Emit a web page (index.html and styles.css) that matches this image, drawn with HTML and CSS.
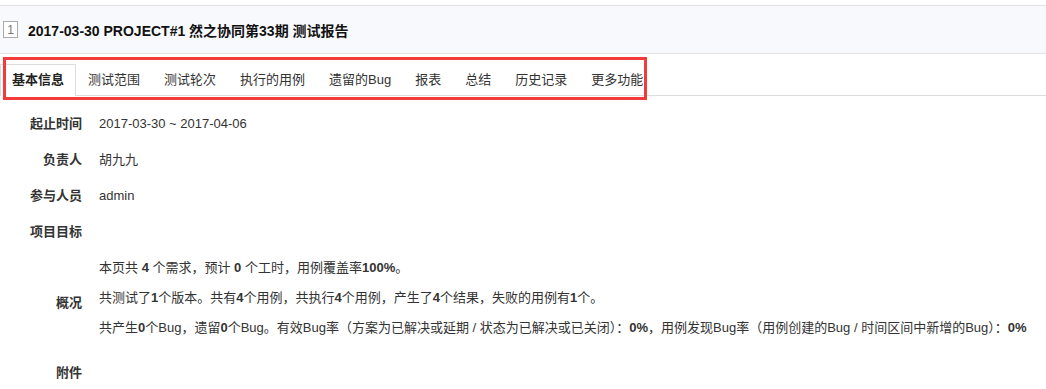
FILE: index.html
```html
<!DOCTYPE html>
<html lang="zh-CN">
<head>
<meta charset="utf-8">
<title>测试报告</title>
<link rel="stylesheet" href="styles.css">
</head>
<body>
<div class="header">
  <span class="idx">1</span>
  <strong class="title">2017-03-30 PROJECT#1 然之协同第33期 测试报告</strong>
</div>
<ul class="nav">
  <li class="tab active">基本信息</li>
  <li class="tab">测试范围</li>
  <li class="tab">测试轮次</li>
  <li class="tab">执行的用例</li>
  <li class="tab">遗留的Bug</li>
  <li class="tab">报表</li>
  <li class="tab">总结</li>
  <li class="tab">历史记录</li>
  <li class="tab">更多功能</li>
</ul>
<div class="mark"></div>
<div class="info">
  <div class="label">起止时间</div>
  <div class="value">2017-03-30 ~ 2017-04-06</div>
  <div class="label">负责人</div>
  <div class="value">胡九九</div>
  <div class="label">参与人员</div>
  <div class="value">admin</div>
  <div class="label">项目目标</div>
  <div class="value"></div>
  <div class="label">概况</div>
  <div class="value overview">
    <p>本页共 <b>4</b> 个需求，预计 <b>0</b> 个工时，用例覆盖率<b>100%</b>。</p>
    <p>共测试了<b>1</b>个版本。共有<b>4</b>个用例，共执行<b>4</b>个用例，产生了<b>4</b>个结果，失败的用例有<b>1</b>个。</p>
    <p>共产生<b>0</b>个Bug，遗留<b>0</b>个Bug。有效Bug率（方案为已解决或延期 / 状态为已解决或已关闭）：<b>0%</b>，用例发现Bug率（用例创建的Bug / 时间区间中新增的Bug）：<b>0%</b></p>
  </div>
  <div class="label">附件</div>
  <div class="value"></div>
</div>
</body>
</html>
```
FILE: styles.css
```css
* { box-sizing: border-box; }
html, body { margin: 0; padding: 0; background: #fff; }
body {
  font-family: "Liberation Sans", Arial, "Noto Sans CJK SC", sans-serif;
  font-size: 13px;
  color: #333;
  padding-top: 5px;
  width: 1046px;
  overflow: hidden;
}
.header {
  display: flex;
  align-items: center;
  height: 49px;
  background: #f8f9fc;
  border-top: 1px solid #e2e2e6;
  border-bottom: 1px solid #e2e2e6;
  padding-left: 3px;
}
.idx {
  display: inline-flex;
  align-items: center;
  justify-content: center;
  width: 15px;
  height: 17px;
  border: 1px solid #aaa;
  color: #777;
  font-size: 12px;
  background: #fff;
  margin-right: 10px;
}
.title {
  font-size: 14px;
  font-weight: bold;
  color: #111;
}
.nav {
  list-style: none;
  margin: 0;
  padding: 10px 0 0 0;
  display: flex;
  border-bottom: 1px solid #ddd;
  height: 42px;
}
.tab {
  height: 32px;
  line-height: 30px;
  padding: 0 11px;
  border: 1px solid transparent;
  border-bottom: 0;
  color: #333;
  white-space: nowrap;
}
.tab.active {
  font-weight: bold;
  background: #fff;
  border-color: #ddd;
  color: #222;
}
.mark {
  position: absolute;
  left: 3px;
  top: 57px;
  width: 644px;
  height: 43px;
  border: 3px solid #f33b3b;
}
.info {
  display: grid;
  grid-template-columns: 82px 1fr;
  column-gap: 17px;
  padding-top: 10px;
}
.label {
  font-weight: bold;
  text-align: right;
  min-height: 36px;
  line-height: 20px;
  display: flex;
  align-items: center;
  justify-content: flex-end;
  white-space: nowrap;
}
.value {
  min-height: 36px;
  line-height: 20px;
  display: flex;
  align-items: center;
  white-space: nowrap;
}
.value.overview {
  display: block;
  padding: 8px 0 7px;
}
.overview p {
  margin: 0 0 10px;
  line-height: 20px;
}
.overview b { font-weight: bold; }
```
